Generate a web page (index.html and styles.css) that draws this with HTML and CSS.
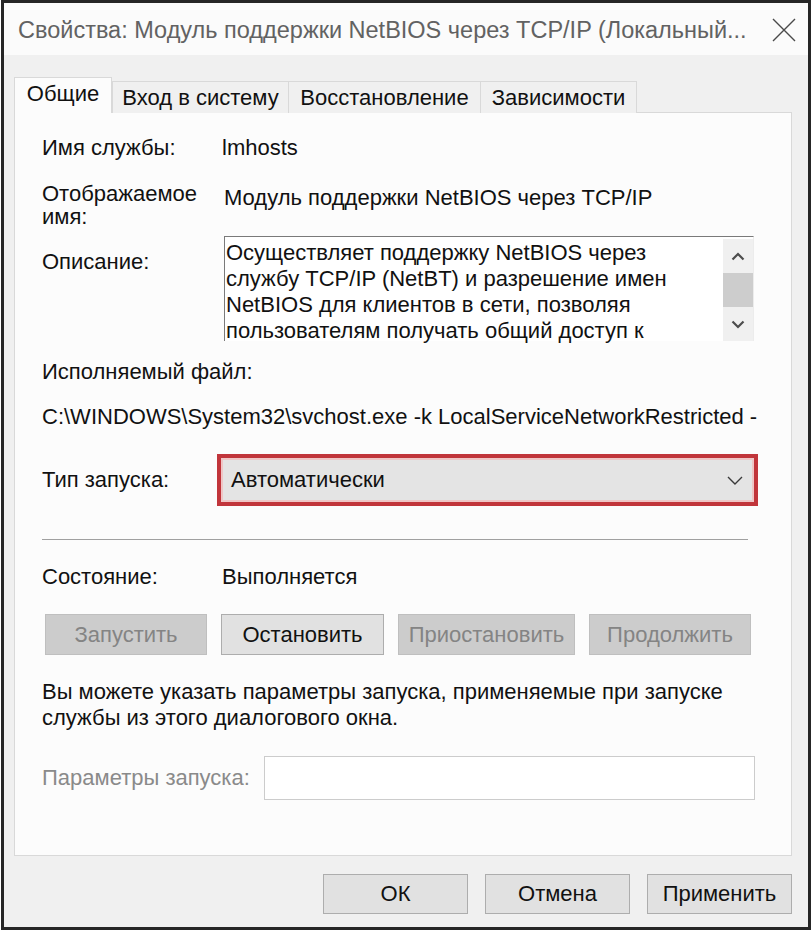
FILE: index.html
```html
<!DOCTYPE html>
<html lang="ru">
<head>
<meta charset="utf-8">
<title>Свойства</title>
<link rel="stylesheet" href="styles.css">
</head>
<body>
<div class="window">
  <div class="titlebar">
    <div class="title">Свойства: Модуль поддержки NetBIOS через TCP/IP (Локальный...</div>
    <svg class="close" width="24" height="24" viewBox="0 0 24 24"><path d="M1 1 L23 23 M23 1 L1 23" stroke="#4a4a4a" stroke-width="1.4" fill="none"/></svg>
  </div>
  <div class="client">
    <div class="tabs">
      <div class="tab active">Общие</div>
      <div class="tab t2">Вход в систему</div>
      <div class="tab t3">Восстановление</div>
      <div class="tab t4">Зависимости</div>
    </div>
    <div class="panel">
      <div class="row r1">
        <div class="label">Имя службы:</div>
        <div class="value">lmhosts</div>
      </div>
      <div class="row r2">
        <div class="label">Отображаемое<br>имя:</div>
        <div class="value">Модуль поддержки NetBIOS через TCP/IP</div>
      </div>
      <div class="row r3">
        <div class="label">Описание:</div>
        <div class="desc">
          <div class="desc-text">Осуществляет поддержку NetBIOS через<br>службу TCP/IP (NetBT) и разрешение имен<br>NetBIOS для клиентов в сети, позволяя<br>пользователям получать общий доступ к</div>
          <div class="scroll">
            <div class="sbtn"><svg width="14" height="9" viewBox="0 0 14 9"><path d="M1.5 7.5 L7 2 L12.5 7.5" stroke="#4d4d4d" stroke-width="2.2" fill="none"/></svg></div>
            <div class="thumb"></div>
            <div class="sbtn"><svg width="14" height="9" viewBox="0 0 14 9"><path d="M1.5 1.5 L7 7 L12.5 1.5" stroke="#4d4d4d" stroke-width="2.2" fill="none"/></svg></div>
          </div>
        </div>
      </div>
      <div class="row r4">Исполняемый файл:</div>
      <div class="row r5">C:\WINDOWS\System32\svchost.exe -k LocalServiceNetworkRestricted -p</div>
      <div class="row r6">
        <div class="label">Тип запуска:</div>
        <div class="combo">
          <span>Автоматически</span>
          <svg width="16" height="9" viewBox="0 0 16 9"><path d="M1 1 L8 8 L15 1" stroke="#3a3a3a" stroke-width="1.4" fill="none"/></svg>
        </div>
      </div>
      <div class="sep"></div>
      <div class="row r7">
        <div class="label">Состояние:</div>
        <div class="value">Выполняется</div>
      </div>
      <div class="actions">
        <div class="btn disabled">Запустить</div>
        <div class="btn">Остановить</div>
        <div class="btn disabled">Приостановить</div>
        <div class="btn disabled">Продолжить</div>
      </div>
      <p class="hint">Вы можете указать параметры запуска, применяемые при запуске<br>службы из этого диалогового окна.</p>
      <div class="row r8">
        <div class="label muted">Параметры запуска:</div>
        <div class="input"></div>
      </div>
    </div>
    <div class="footer">
      <div class="btn fbtn">ОК</div>
      <div class="btn fbtn">Отмена</div>
      <div class="btn fbtn">Применить</div>
    </div>
  </div>
</div>
</body>
</html>
```
FILE: styles.css
```css
* { box-sizing: border-box; }
html, body { margin: 0; padding: 0; background: #ffffff; }
body {
  padding-left: 1px;
  font-family: "Liberation Sans", Arial, sans-serif;
  font-size: 22px;
  color: #111;
}
.window {
  width: 810px;
  height: 930px;
  border: 3px solid #262626;
  display: flex;
  flex-direction: column;
  background: #f0f0f0;
}
.titlebar {
  height: 52px;
  background: #fbfbfb;
  display: flex;
  align-items: center;
  padding: 2px 12px 0 14px;
  flex: none;
}
.title {
  flex: 1;
  white-space: nowrap;
  overflow: hidden;
  color: #626262;
  font-size: 23.5px;
}
.close { flex: none; margin-left: 20px; }
.client {
  flex: 1;
  padding: 23px 16px 12px 10px;
  display: flex;
  flex-direction: column;
}
.tabs {
  height: 35px;
  display: flex;
  align-items: flex-end;
  margin-bottom: -1px;
  position: relative;
  z-index: 1;
}
.tab {
  height: 32px;
  border: 1px solid #d9d9d9;
  border-bottom: none;
  background: #f0f0f0;
  display: flex;
  align-items: center;
  justify-content: center;
  margin-left: -1px;
  white-space: nowrap;
}
.tab.active {
  height: 36px;
  width: 98px;
  margin-left: 0;
  background: #fcfcfc;
  padding-bottom: 3px;
  position: relative;
  z-index: 2;
}
.t2 { width: 177px; margin-left: 0; }
.t3 { width: 193px; }
.t4 { width: 157px; }
.panel {
  height: 744px;
  border: 1px solid #d9d9d9;
  background: #fcfcfc;
  padding: 22px 33px 0 27px;
  display: flex;
  flex-direction: column;
}
.row { display: flex; line-height: 26px; }
.label { width: 180px; flex: none; }
.r2 { margin-top: 21px; line-height: 23px; }
.r2 .value { padding-top: 4px; padding-left: 2px; }
.r3 { margin-top: 8px; }
.r3 .label { padding-top: 13px; }
.desc {
  margin-left: 2px;
  width: 530px;
  height: 105px;
  border-top: 1px solid #7a7a7a;
  border-left: 1px solid #7a7a7a;
  border-right: 1px solid #ececec;
  background: #ffffff;
  display: flex;
}
.desc-text {
  flex: 1;
  padding: 3px 0 0 1px;
  line-height: 26px;
  white-space: nowrap;
}
.scroll {
  width: 30px;
  margin-top: 2px;
  background: #f0f0f0;
  display: flex;
  flex-direction: column;
}
.sbtn {
  height: 34px;
  display: flex;
  align-items: center;
  justify-content: center;
}
.thumb { height: 34px; background: #cdcdcd; }
.r4 { margin-top: 18px; }
.r5 { margin-top: 19px; white-space: nowrap; overflow: hidden; }
.r6 { margin-top: 24px; align-items: center; }
.combo {
  margin-left: -5px;
  width: 542px;
  height: 52px;
  border: 4px solid #c1353b;
  background: #e4e4e4;
  box-shadow: inset 0 0 0 2px #efc6c6;
  display: flex;
  align-items: center;
  justify-content: space-between;
  padding: 0 11px 0 10px;
}
.sep {
  margin-top: 33px;
  width: 706px;
  height: 1px;
  background: #a0a0a0;
  flex: none;
}
.r7 { margin-top: 24px; }
.actions {
  margin-top: 24px;
  margin-left: 3px;
  display: grid;
  grid-template-columns: 162px 163px 177px 162px;
  column-gap: 14px;
}
.btn {
  height: 41px;
  border: 1px solid #adadad;
  background: #e1e1e1;
  display: flex;
  align-items: center;
  justify-content: center;
  white-space: nowrap;
}
.btn.disabled {
  background: #cccccc;
  border-color: #bfbfbf;
  color: #848484;
}
.hint {
  margin: 24px 0 0 0;
  line-height: 26px;
}
.r8 { margin-top: 25px; align-items: center; }
.r8 .label { width: 222px; }
.muted { color: #8a8a8a; }
.input {
  width: 491px;
  height: 44px;
  border: 1px solid #cccccc;
  background: #ffffff;
}
.footer {
  margin-top: 18px;
  display: flex;
  justify-content: flex-end;
  gap: 17px;
}
.fbtn { width: 145px; height: 40px; }
```
